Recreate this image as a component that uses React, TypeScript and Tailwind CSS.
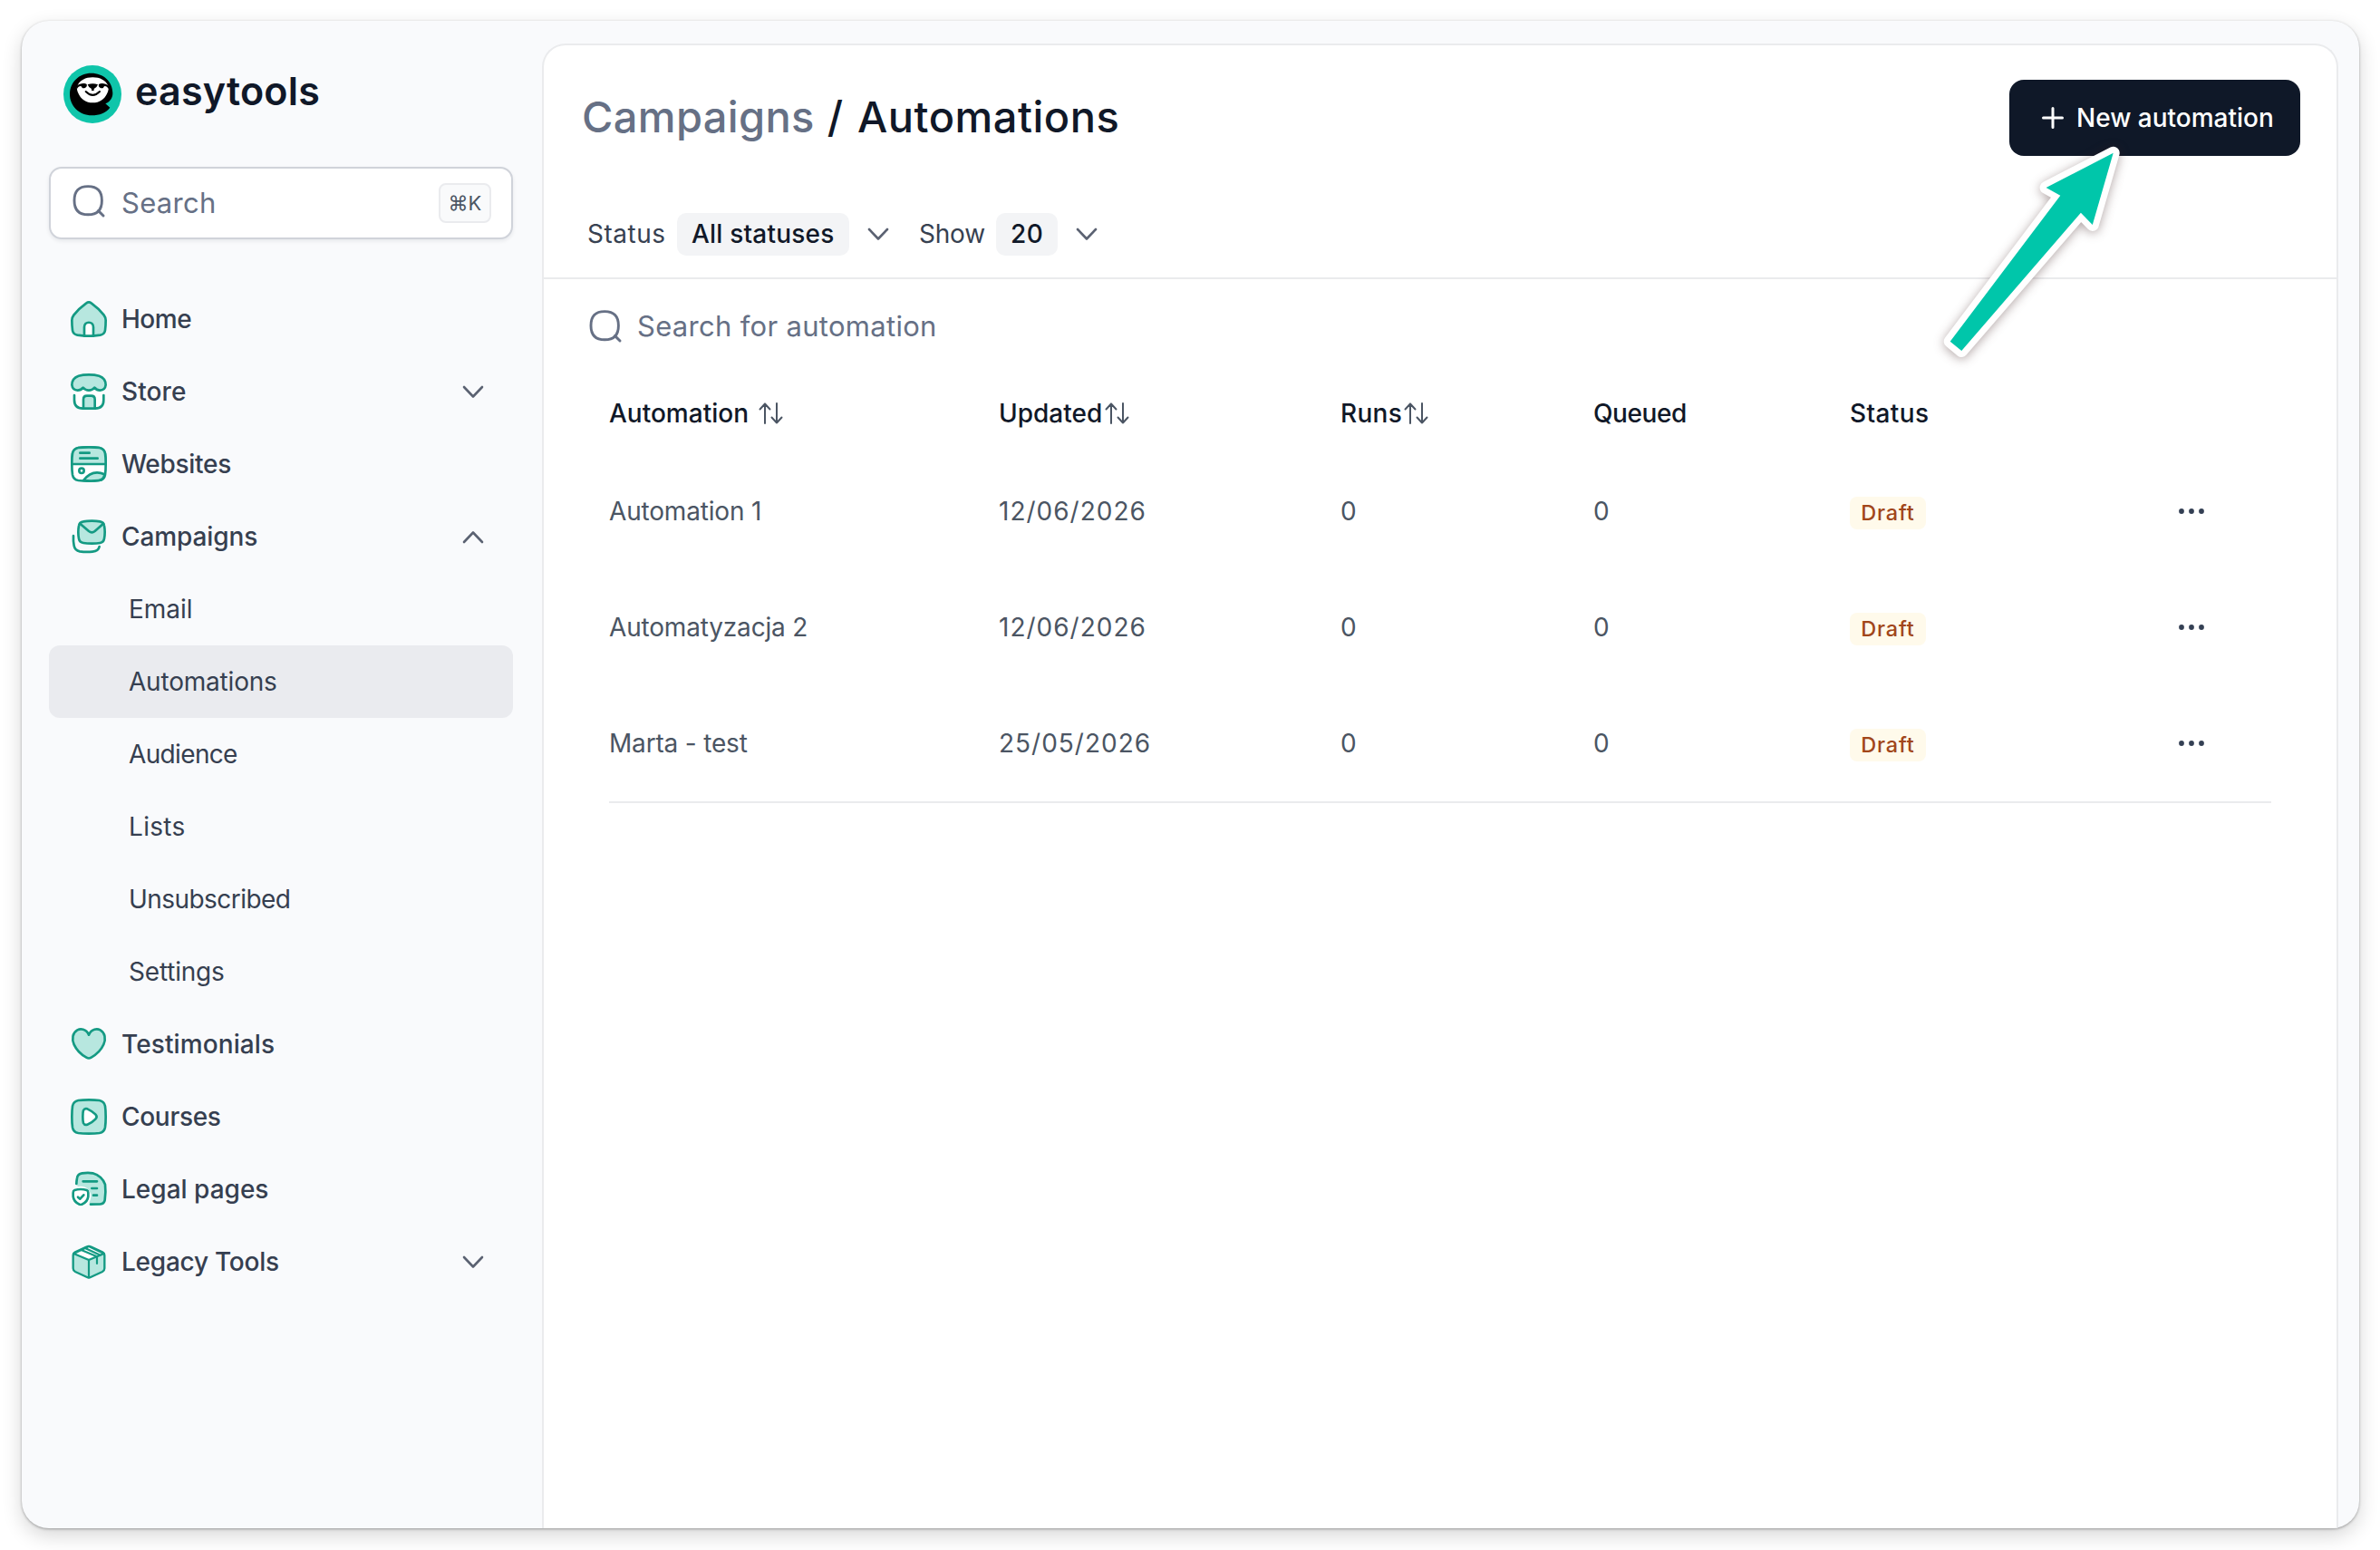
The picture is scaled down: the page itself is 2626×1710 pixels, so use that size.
import type { ReactNode } from 'react';

const STROKE = '#149a83';
const FILL = '#b7e7df';

function NavIcon({ children }: { children: ReactNode }) {
  return (
    <svg
      viewBox="0 0 120 120"
      className="size-10 shrink-0 overflow-visible"
      fill="none"
      stroke={STROKE}
      strokeWidth="8"
      strokeLinecap="round"
      strokeLinejoin="round"
    >
      {children}
    </svg>
  );
}

const SQUIRCLE = 'M60 4Q82 4 95 6Q111 9 114 25Q116 38 116 60Q116 82 114 95Q111 111 95 114Q82 116 60 116Q38 116 25 114Q9 111 6 95Q4 82 4 60Q4 38 6 25Q9 9 25 6Q38 4 60 4Z';

const HomeIcon = () => (
  <NavIcon>
    <path fill={FILL} d="M52 7Q60 1 68 7Q92 24 110 47Q116 55 116 64Q116 82 114 97Q112 110 98 113Q80 116 60 116Q40 116 22 113Q8 110 6 97Q4 82 4 64Q4 55 10 47Q28 24 52 7Z" />
    <path fill="#fff" d="M45 116V87C45 66 75 66 75 87V116Z" />
  </NavIcon>
);

const StoreIcon = () => (
  <NavIcon>
    <path fill="#fff" stroke="none" d="M12 56H109V96Q106 114 88 116H34Q14 114 12 96Z" />
    <path fill={FILL} d="M60 4Q80 4 94 8Q116 16 116 38Q114 55 97 56Q86 56 79 47Q71 56 60 56Q49 56 41 47Q34 56 23 56Q6 55 4 38Q4 16 26 8Q40 4 60 4Z" />
    <path d="M12 72V88Q12 116 40 116H81Q109 116 109 88V72" />
    <path fill={FILL} d="M42 116V86Q42 74 54 74H68Q80 74 80 86V116Z" />
  </NavIcon>
);

const WebsitesIcon = () => (
  <NavIcon>
    <path fill="#fff" d={SQUIRCLE} />
    <path fill={FILL} d="M60 4Q82 4 95 6Q111 9 114 25Q116 38 116 60H4Q4 38 6 25Q9 9 25 6Q38 4 60 4Z" />
    <path d="M31 23H62M31 41H89" />
    <circle cx="36" cy="82" r="8" />
    <path fill={FILL} d="M42 114Q72 76 112 94Q111 112 92 114Q66 117 42 114Z" />
  </NavIcon>
);

const CampaignsIcon = () => (
  <NavIcon>
    <path fill={FILL} d="M70 8Q86 8 97 10Q109 12 111 24Q113 34 113 45Q113 57 111 67Q109 79 97 81Q86 83 70 83Q53 83 42 81Q29 79 27 67Q25 57 25 45Q25 34 27 24Q29 12 42 10Q53 8 70 8Z" />
    <path d="M31 17L60 42Q70 50 80 42L108 17" />
    <path d="M9 57Q8 76 11 90Q14 106 30 109Q50 112 72 110Q92 108 95 93" />
  </NavIcon>
);

const HeartIcon = () => (
  <NavIcon>
    <path fill={FILL} d="M60 29C69 8 88 8 98 13C114 22 117 43 109 61C100 81 84 95 68 104Q60 109 52 104C36 95 20 81 11 61C3 43 6 22 22 13C32 8 51 8 60 29Z" />
  </NavIcon>
);

const CoursesIcon = () => (
  <NavIcon>
    <path fill={FILL} d={SQUIRCLE} />
    <path fill="#fff" d="M40 60Q40 45 42 39Q46 31 55 34Q72 42 82 52Q90 60 82 68Q72 79 55 86Q46 89 42 81Q40 75 40 60Z" />
  </NavIcon>
);

const LegalIcon = () => (
  <NavIcon>
    <path fill={FILL} stroke="none" d="M20 46V28Q22 9 40 7Q56 5 72 7Q102 14 114 44Q117 70 113 96Q111 108 98 109L66 110Z" />
    <circle cx="33" cy="84" r="34" fill="#fff" stroke="none" />
    <path d="M19 42Q19 34 21 23Q23 9 38 7Q58 4 73 7Q103 16 114 44Q117 70 113 96Q111 108 98 109L66 110" />
    <path d="M41 34H87M70 57H87M75 80H87" />
    <path fill="#fff" d="M33 60Q44 60 53 63Q58 65 58 72V84Q56 102 37 110Q33 112 29 110Q10 102 8 84V72Q8 65 13 63Q22 60 33 60Z" />
    <path d="M24 86L31 92L43 79" />
  </NavIcon>
);

const BoxIcon = () => (
  <NavIcon>
    <path fill={FILL} d="M54 10Q60 7 66 10L105 28Q112 32 112 40V82Q112 89 105 93L66 111Q60 114 54 111L15 93Q8 89 8 82V40Q8 32 15 28Z" strokeWidth="7" />
    <path fill="#fff" d="M60 9L110 33L60 54L10 33Z" strokeWidth="7" />
    <path d="M60 54V112M35 21L87 43V66M48 15L98 38" strokeWidth="6.5" />
  </NavIcon>
);

function Chevron({ up = false, className = '' }: { up?: boolean; className?: string }) {
  return (
    <svg viewBox="0 0 24 15" className={`h-[15px] w-6 shrink-0 ${className}`} fill="none" stroke="#5b6272" strokeWidth="2.6" strokeLinecap="round" strokeLinejoin="round">
      <path d={up ? 'M2 13L12 2.5L22 13' : 'M2 2L12 12.5L22 2'} />
    </svg>
  );
}

function SearchIcon({ className = '' }: { className?: string }) {
  return (
    <svg viewBox="0 0 36 36" className={`size-9 shrink-0 ${className}`} fill="none" stroke="#667085" strokeWidth="2.9" strokeLinecap="round">
      <path d="M17.2 1.6C27.6 1.6 32.4 6.8 32.4 17.2S27.6 32.8 17.2 32.8S2 27.6 2 17.2S6.8 1.6 17.2 1.6Z" />
      <path d="M28.6 28.6L34 34" />
    </svg>
  );
}

function SortIcon({ className = '' }: { className?: string }) {
  return (
    <svg viewBox="0 0 27 24" className={`h-6 w-[27px] shrink-0 ${className}`} fill="none" stroke="#4b5563" strokeWidth="2" strokeLinecap="round" strokeLinejoin="round">
      <path d="M7 23V1.5M1.5 7.5L7 1.5L12.5 7.5M20 1V22.5M14.5 16.5L20 22.5L25.5 16.5" />
    </svg>
  );
}

function Logo() {
  return (
    <svg viewBox="0 0 192 192" className="size-16 shrink-0">
      <circle cx="96" cy="96" r="96" fill="#0fc5aa" />
      <path d="M92 26C132 26 163 54 163 92C163 108 154 121 139 127L154 140C142 157 118 166 94 166C52 166 21 134 21 96C21 56 52 26 92 26Z" fill="#000" />
      <path d="M97 40C121 40 140 50 148 68C151 74 149 84 145 92C137 112 119 124 97 124S57 112 49 92C45 84 43 74 46 68C54 50 73 40 97 40Z" fill="#fff" />
      <path d="M42 70C54 59 70 58 77 63C79 70 74 76 66 76C60 76 62 70 57 69C52 69 48 72 45 78Z" fill="#000" />
      <path d="M152 70C140 59 124 58 117 63C115 70 120 76 128 76C134 76 132 70 137 69C142 69 146 72 149 78Z" fill="#000" />
      <path d="M80 64Q97 58 114 64Q112 72 101 78V84H93V78Q82 72 80 64Z" fill="#000" />
      <path d="M74 87Q97 110 120 87" fill="none" stroke="#000" strokeWidth="6" strokeLinecap="round" />
    </svg>
  );
}

type NavChild = { label: string; tracking: string; active?: boolean };
type NavEntry = { label: string; tracking: string; icon: ReactNode; chevron?: 'up' | 'down'; children?: NavChild[] };

const nav: NavEntry[] = [
  { label: 'Home', tracking: 'tracking-[-0.5px]', icon: <HomeIcon /> },
  { label: 'Store', tracking: 'tracking-[0.1px]', icon: <StoreIcon />, chevron: 'down' },
  { label: 'Websites', tracking: 'tracking-[-0.3px]', icon: <WebsitesIcon /> },
  {
    label: 'Campaigns',
    tracking: 'tracking-[-0.1px]',
    icon: <CampaignsIcon />,
    chevron: 'up',
    children: [
      { label: 'Email', tracking: 'tracking-[0px]' },
      { label: 'Automations', tracking: 'tracking-[-0.2px]', active: true },
      { label: 'Audience', tracking: 'tracking-[-0.65px]' },
      { label: 'Lists', tracking: 'tracking-[0.3px]' },
      { label: 'Unsubscribed', tracking: 'tracking-[-0.55px]' },
      { label: 'Settings', tracking: 'tracking-[-0.2px]' },
    ],
  },
  { label: 'Testimonials', tracking: 'tracking-[0.1px]', icon: <HeartIcon /> },
  { label: 'Courses', tracking: 'tracking-[-0.3px]', icon: <CoursesIcon /> },
  { label: 'Legal pages', tracking: 'tracking-[0px]', icon: <LegalIcon /> },
  { label: 'Legacy Tools', tracking: 'tracking-[-0.25px]', icon: <BoxIcon />, chevron: 'down' },
];

function Sidebar() {
  return (
    <aside className="flex w-[575px] shrink-0 flex-col pr-8 pl-[30px]">
      <div className="mt-[49px] flex h-16 items-center pl-4">
        <Logo />
        <span className="mb-[7px] ml-[15px] text-[43px] leading-none font-semibold tracking-[0.2px] text-[#101828]">easytools</span>
      </div>

      <div className="mt-12 flex h-20 w-[512px] items-center rounded-[14px] border-2 border-[#d0d3da] bg-white pr-[22px] pl-6 shadow-[0_2px_4px_rgba(16,24,40,0.08)]">
        <SearchIcon className="-mt-1" />
        <span className="ml-[18px] text-[31px] tracking-[0.3px] text-[#667085]">Search</span>
        <span className="ml-auto flex h-11 w-[58px] items-center justify-center rounded-lg border-2 border-[#eaebee] bg-[#f9fafb] text-[22px] text-[#4b5563]">⌘K</span>
      </div>

      <nav className="mt-12 flex w-[512px] flex-col text-[28px] text-[#363f50]">
        {nav.map((item) => (
          <div key={item.label}>
            <div className="flex h-20 items-center pr-[32px] pl-6">
              {item.icon}
              <span className={`ml-4 font-medium ${item.tracking}`}>{item.label}</span>
              {item.chevron && <Chevron up={item.chevron === 'up'} className="ml-auto" />}
            </div>
            {item.children?.map((child) => (
              <div
                key={child.label}
                className={`flex h-20 items-center rounded-xl pl-[88px] ${child.tracking} ${child.active ? 'bg-[#eaebef]' : ''}`}
              >
                {child.label}
              </div>
            ))}
          </div>
        ))}
      </nav>
    </aside>
  );
}

const rows = [
  { name: 'Automation 1', updated: '12/06/2026' },
  { name: 'Automatyzacja 2', updated: '12/06/2026' },
  { name: 'Marta - test', updated: '25/05/2026' },
];

const COLS = 'grid grid-cols-[430px_377px_279px_283px_363px_1fr] items-center';

function Arrow() {
  const d = 'M2331.7 168.7L2257.6 207L2273.3 215.7L2151.7 376.7L2164.3 387L2295.9 234.7L2308.8 248Z';
  return (
    <svg
      viewBox="2130 150 220 260"
      className="pointer-events-none absolute top-[150px] left-[2130px] h-[260px] w-[220px] overflow-visible drop-shadow-[0_2px_6px_rgba(60,30,30,0.4)]"
    >
      <path d={d} fill="#fff" stroke="#fff" strokeWidth="14" strokeLinejoin="round" />
      <path d={d} fill="#00c6aa" />
    </svg>
  );
}

export default function App() {
  return (
    <div className="relative h-[1710px] w-[2626px] overflow-hidden bg-white pt-[23px] pl-6 font-[Inter,sans-serif]">
      <div className="flex h-[1663px] w-[2579px] overflow-hidden rounded-[30px] bg-[#f9fafc] shadow-[0_1px_3px_rgba(0,0,0,0.32),0_8px_22px_rgba(0,0,0,0.16)]">
        <Sidebar />

        <main className="mt-[25px] -ml-px w-[1982px] rounded-t-[26px] border-2 border-b-0 border-[#eaebed] bg-white">
          <header className="flex items-start justify-between pt-[38px] pr-10 pl-[42px]">
            <h1 className="flex h-[82px] items-center text-[47px] font-medium whitespace-pre text-[#101828]">
              <span className="tracking-[0.33px] text-[#667085]">Campaigns</span>
              <span className="ml-[14px]">/</span>
              <span className="ml-4 tracking-[0.5px]">Automations</span>
            </h1>
            <button className="flex h-[84px] w-[321px] items-center rounded-2xl bg-[#0f1828] pl-9 text-[28px] font-medium text-white">
              <svg viewBox="0 0 24 24" className="size-6" fill="none" stroke="#fff" strokeWidth="3" strokeLinecap="round">
                <path d="M12 1.5V22.5M1.5 12H22.5" />
              </svg>
              <span className="ml-[14px] whitespace-nowrap">New automation</span>
            </button>
          </header>

          <div className="flex h-[136px] items-start border-b-2 border-[#eaebed] pt-[63px] pl-12 text-[28px] leading-[47px]">
            <span className="w-[99px] tracking-[0.5px] text-[#374151]">Status</span>
            <span className="h-[47px] w-[190px] rounded-[10px] bg-[#f3f4f6] pl-4 font-medium tracking-[0.2px] text-[#101828]">All statuses</span>
            <Chevron className="mt-4 ml-5" />
            <span className="ml-[33px] w-[85px] tracking-[-0.2px] text-[#374151]">Show</span>
            <span className="h-[47px] w-[68px] rounded-[10px] bg-[#f3f4f6] pl-4 font-medium tracking-[0.6px] text-[#101828]">20</span>
            <Chevron className="mt-4 ml-5" />
          </div>

          <div className="flex h-[104px] items-center pl-[50px]">
            <SearchIcon />
            <span className="ml-[17px] text-[31px] tracking-[0.3px] text-[#667085]">Search for automation</span>
          </div>

          <section className="mr-[72px] ml-[72px] border-b-2 border-[#eaebed] text-[28px]">
            <div className={`${COLS} h-[88px] font-medium text-[#101828]`}>
              <div className="flex items-center">
                Automation
                <SortIcon className="ml-[11px]" />
              </div>
              <div className="flex items-center">
                Updated
                <SortIcon className="ml-[3px]" />
              </div>
              <div className="flex items-center tracking-[0.3px]">
                Runs
                <SortIcon className="ml-[2px]" />
              </div>
              <div className="tracking-[-0.4px]">Queued</div>
              <div className="tracking-[0.4px]">Status</div>
            </div>
            {rows.map((row) => (
              <div key={row.name} className={`${COLS} h-32 text-[#4b5563]`}>
                <div className="tracking-[-0.18px]">{row.name}</div>
                <div className="tracking-[1px]">{row.updated}</div>
                <div>0</div>
                <div>0</div>
                <div className="mt-1">
                  <span className="flex h-9 w-[84px] items-center justify-center rounded-lg bg-[#fffaeb] text-[23.5px] font-medium tracking-[0.8px] text-[#a1461a]">Draft</span>
                </div>
                <svg viewBox="0 0 28 6" className="h-1.5 w-7" fill="#344054">
                  <circle cx="3" cy="3" r="2.9" />
                  <circle cx="14" cy="3" r="2.9" />
                  <circle cx="25" cy="3" r="2.9" />
                </svg>
              </div>
            ))}
          </section>
        </main>
      </div>
      <Arrow />
    </div>
  );
}
